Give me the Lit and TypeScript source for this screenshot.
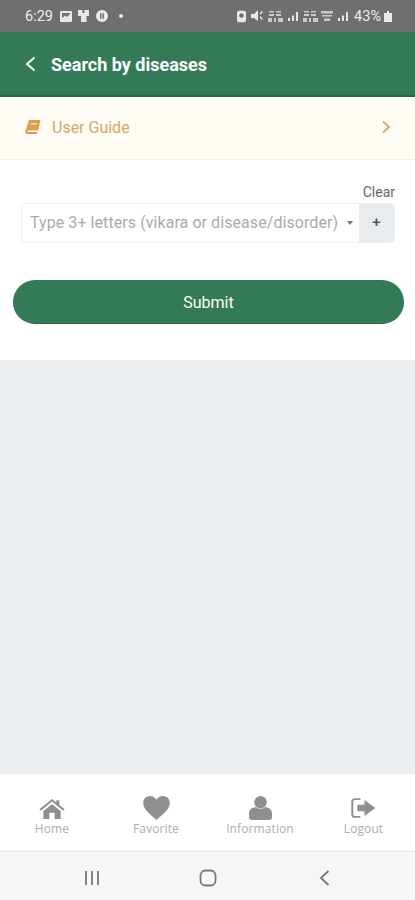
import { LitElement, html, css, svg } from "lit";
import { customElement } from "lit/decorators.js";

const tabs = [
  { label: "Home", w: 26, h: 21, vb: "0 0 30 24", icon: svg`<path d="M15 1 L20 5 V2.500 H23.500 V8 L29.500 13 L28 14.500 L15 4 L2 14.500 L.5 13 Z"/><path d="M15 7 L25 15 V24 H18 V17 H12 V24 H5 V15 Z"/>` },
  { label: "Favorite", w: 29, h: 24, vb: "0 0 30 26", icon: svg`<path d="M15 26 C10 21 1 15 .6 8 C.4 3 4 0 8 0 C11 0 13.600 1.600 15 4 C16.400 1.600 19 0 22 0 C26 0 29.600 3 29.400 8 C29 15 20 21 15 26 Z"/>` },
  { label: "Information", w: 23, h: 24, vb: "0 0 24 25", icon: svg`<circle cx="12" cy="6.500" r="6.500"/><path d="M7 11.500 C9 14 15 14 17 11.500 C21 12 24 14 24 19 V22 C24 24 23 25 21 25 H3 C1 25 0 24 0 22 V19 C0 14 3 12 7 11.500 Z"/>` },
  { label: "Logout", w: 25, h: 20, vb: "0 0 26 21", icon: svg`<path d="M9 1.200 H4 C2.200 1.200 1.200 2.200 1.200 4 V17 C1.200 18.800 2.200 19.800 4 19.800 H9" fill="none" stroke="#8f8f8f" stroke-width="2" stroke-linecap="round"/><path d="M6.500 7 H14 V2 L25.500 10.500 L14 19 V14 H6.500 Z"/>` },
];

const volte = svg`<path d="M1 0H6V1.500H1ZM8 0H13V1.500H8ZM1 3H6V5H1ZM8 3H13V5H8ZM0 7H4V11H0ZM6 7H8V11H6ZM10 7H15V11H10Z"/>`;

@customElement("app-root")
export class AppRoot extends LitElement {
  static styles = css`
    :host { display: block; width: 415px; height: 900px; font-family: Roboto, "Liberation Sans", sans-serif; }
    .page { display: flex; flex-direction: column; height: 900px; overflow: hidden; background: #ebeff2; }
    .status { height: 32px; flex: none; background: #6f6f6f; color: #eeeeee; display: flex; align-items: center; justify-content: space-between; padding: 0 23px 0 25px; font-size: 14.500px; box-sizing: border-box; }
    .status-group { display: flex; align-items: center; }
    .time { margin-right: 7px; }
    .st-ico { display: block; fill: #e8e8e8; flex: none; }
    .g3 { margin-left: 3px; }
    .g4 { margin-left: 5px; }
    .g6 { margin-left: 6px; }
    .g12 { margin-left: 11px; }
    .dim { opacity: .75; }
    .pct { margin: 0 3px 0 6px; font-size: 14.500px; }
    .header { height: 65px; flex: none; box-sizing: border-box; background: #337a59; border-bottom: 2px solid #1f6a48; display: flex; align-items: center; padding: 0 0 0 25px; color: #fff; }
    .back { width: 11px; height: 16px; margin-right: 15px; flex: none; }
    .title { font-size: 18px; font-weight: 700; line-height: 24px; margin-top: 3px; }
    .guide { height: 63px; flex: none; box-sizing: border-box; background: #fffcf5; border-bottom: 1px solid #f3f1ec; display: flex; align-items: center; justify-content: space-between; padding: 0 24px 2px 25px; color: #d8a767; font-size: 16px; }
    .guide-left { display: flex; align-items: center; gap: 11px; }
    .form { height: 200px; flex: none; background: #fff; box-sizing: border-box; padding: 24px 11px 0 13px; display: flex; flex-direction: column; }
    .clear { align-self: flex-end; font-size: 14px; line-height: 16px; color: #666; margin-right: 9px; margin-bottom: 3px; }
    .select { display: flex; height: 40px; margin: 0 9px 0 8px; box-sizing: border-box; border: 1px solid #eef0f2; border-radius: 4px; overflow: hidden; }
    .select-main { flex: 1; display: flex; align-items: center; justify-content: space-between; padding: 0 6px 2px 8px; color: #a8abae; font-size: 16px; letter-spacing: .07px; white-space: nowrap; }
    .caret { width: 0; height: 0; border: 3px solid transparent; border-top: 4px solid #777; border-bottom: 0; margin-top: 2px; }
    .plus { width: 35px; flex: none; background: #e9ecef; display: flex; align-items: center; justify-content: center; color: #555; font-size: 15px; font-weight: 500; padding-bottom: 2px; box-sizing: border-box; }
    .submit { margin-top: 37px; height: 44px; border-radius: 22px; background: #337a59; border-bottom: 1px solid #1f6a48; box-sizing: border-box; color: #fff; font-size: 16px; display: flex; align-items: center; justify-content: center; padding-top: 1px; }
    .spacer { flex: 1; }
    .tabs { height: 78px; flex: none; background: #fff; border-bottom: 1px solid #e2e2e2; box-sizing: border-box; display: grid; grid-template-columns: 104px 104px 104px 103px; }
    .tab { display: flex; flex-direction: column; align-items: center; justify-content: flex-end; padding-bottom: 14px; color: #adadad; font-family: "Open Sans", sans-serif; font-size: 12px; line-height: 16px; letter-spacing: .1px; }
    .tab-ico { height: 24px; display: flex; align-items: center; margin-bottom: 1px; }
    .tab svg { fill: #8f8f8f; display: block; }
    .nav { height: 48px; flex: none; box-sizing: border-box; background: #f6f6f6; display: grid; grid-template-columns: 1fr 1fr 1fr; padding: 3px 33px 0 34px; align-items: center; justify-items: center; }
    .nav svg { display: block; fill: none; stroke: #777; stroke-width: 1.800; }
  `;

  render() {
    return html`<div class="page">
      <div class="status">
        <div class="status-group">
          <span class="time">6:29</span>
          <svg class="st-ico" width="12" height="11" viewBox="0 0 12 11"><path fill-rule="evenodd" d="M1 0H11Q12 0 12 1V10Q12 11 11 11H1Q0 11 0 10V1Q0 0 1 0ZM2 2V7L5 4.500 7 6 10 3V2Z"/></svg>
          <svg class="st-ico g4" width="13" height="14" viewBox="0 0 13 14"><path d="M1 1H5.500V4H7.500V1H12V7H9.500V13H4V7H1Z"/></svg>
          <svg class="st-ico g6" width="12" height="12" viewBox="0 0 13 13"><path fill-rule="evenodd" d="M6.500 0A6.500 6.500 0 1 1 6.499 0ZM4.500 3.500V9.500H6V3.500ZM7 3.500V9.500H8.500V3.500Z"/></svg>
          <svg class="st-ico g12" width="4" height="4" viewBox="0 0 4 4"><circle cx="2" cy="2" r="2"/></svg>
        </div>
        <div class="status-group">
          <svg class="st-ico" width="9" height="13" viewBox="0 0 10 13"><path fill-rule="evenodd" d="M2 0H8Q10 0 10 2V11Q10 13 8 13H2Q0 13 0 11V2Q0 0 2 0ZM5 3A2.500 2.500 0 1 0 5.001 3Z"/></svg>
          <svg class="st-ico g4" width="12" height="12" viewBox="0 0 12 12"><path d="M0 4H3L7 0V11L3 8H0ZM8.500 3.500L11 1 12 2 9.500 4.500ZM8.500 7L9.500 6 12 9 11 10Z"/></svg>
          <svg class="st-ico g4 dim" width="15" height="11" viewBox="0 0 15 11">${volte}</svg>
          <svg class="st-ico g4" width="10" height="9" viewBox="0 0 10 9"><path d="M0 6H2V9H0ZM4 3.500H6V9H4ZM8 0H10V9H8Z"/></svg>
          <svg class="st-ico g4 dim" width="15" height="11" viewBox="0 0 15 11">${volte}</svg>
          <svg class="st-ico g3 dim" width="12" height="10" viewBox="0 0 12 10"><path d="M0 0H12V2.500H0ZM1 4H11V5.500H1ZM3 7.500H9V10H3Z"/></svg>
          <svg class="st-ico g4" width="10" height="9" viewBox="0 0 10 9"><path d="M0 6H2V9H0ZM4 3.500H6V9H4ZM8 0H10V9H8Z"/></svg>
          <span class="pct">43%</span>
          <svg class="st-ico" width="8" height="11" viewBox="0 0 8 11"><path d="M3 0H5V2H8V11H0V2H3Z"/></svg>
        </div>
      </div>
      <div class="header">
        <svg class="back" viewBox="0 0 11 16"><path d="M9.500 1.500L2 8L9.500 14.500" fill="none" stroke="#fff" stroke-width="2"/></svg>
        <div class="title">Search by diseases</div>
      </div>
      <div class="guide">
        <div class="guide-left">
          <svg width="16" height="14" viewBox="0 0 16 14"><path fill="#dca04b" d="M4 0H15.500L13 10.500H3L2.500 12H12.500L12 14H2Q0 14 .3 11.500Z"/><path fill="#f3dcb5" d="M5.500 3H12V4.500H5.500Z"/></svg>
          <span>User Guide</span>
        </div>
        <svg width="10" height="14" viewBox="0 0 10 14"><path d="M2 1.500L8 7L2 12.500" fill="none" stroke="#d8a767" stroke-width="1.800"/></svg>
      </div>
      <div class="form">
        <div class="clear">Clear</div>
        <div class="select">
          <div class="select-main"><span>Type 3+ letters (vikara or disease/disorder)</span><span class="caret"></span></div>
          <div class="plus">+</div>
        </div>
        <div class="submit">Submit</div>
      </div>
      <div class="spacer"></div>
      <div class="tabs">
        ${tabs.map(t => html`<div class="tab"><div class="tab-ico"><svg width=${t.w} height=${t.h} viewBox=${t.vb}>${t.icon}</svg></div><span>${t.label}</span></div>`)}
      </div>
      <div class="nav">
        <svg width="16" height="16" viewBox="0 0 16 16"><path d="M2 1V15M8 1V15M14 1V15"/></svg>
        <svg width="18" height="18" viewBox="0 0 18 18"><rect x="1.500" y="1.500" width="15" height="15" rx="5"/></svg>
        <svg width="11" height="16" viewBox="0 0 11 16"><path d="M9.500 1L2 8L9.500 15"/></svg>
      </div>
    </div>`;
  }
}
